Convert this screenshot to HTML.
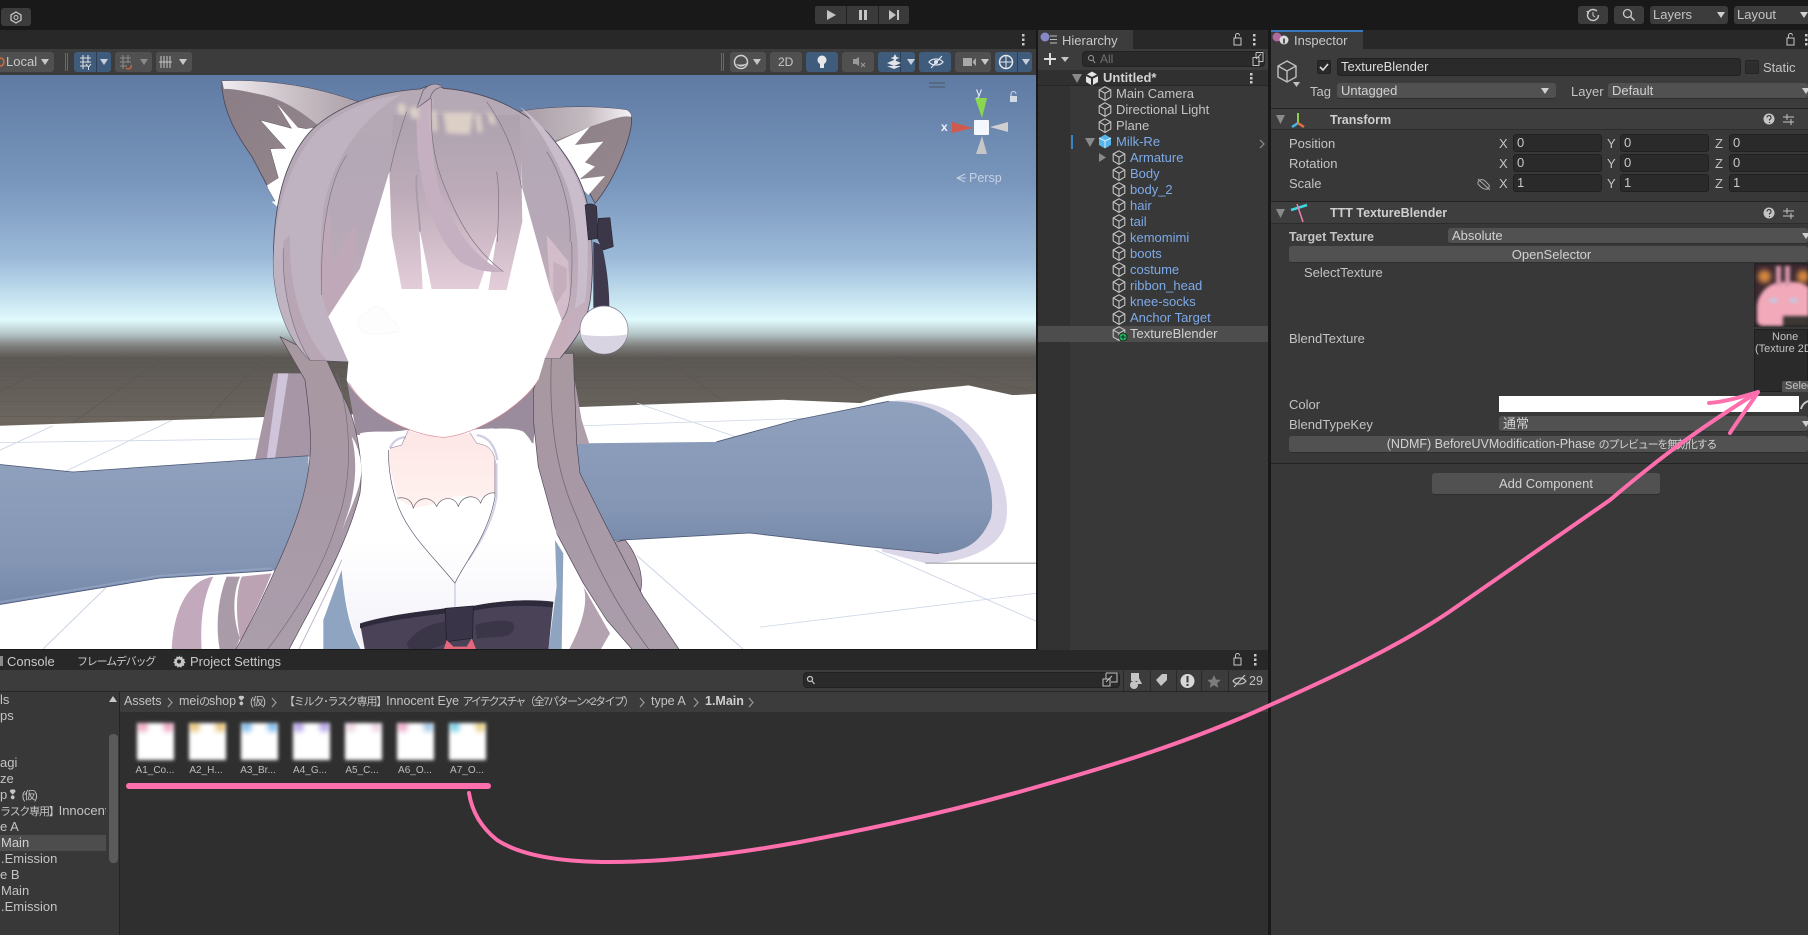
<!DOCTYPE html>
<html lang="ja"><head><meta charset="utf-8"><title>Unity TextureBlender</title>
<style>
html,body{margin:0;padding:0;background:#191919;width:1808px;height:935px;overflow:hidden}
body{position:relative;font:13px/16px "Liberation Sans","Noto Sans CJK JP",sans-serif;color:#c4c4c4}
.r{position:absolute}
.t{position:absolute;white-space:nowrap;height:16px;line-height:16px}
.b{position:absolute;background:#505050;border-radius:3px}
.u{background:#3f5c7d}
.f{position:absolute;background:#2a2a2a;border:1px solid #212121;border-radius:3px;box-sizing:border-box;color:#c8c8c8;padding-left:3px;line-height:16px;height:18px}
.d{position:absolute;background:#515151;border-radius:3px;box-sizing:border-box;color:#d2d2d2;padding-left:4px;line-height:15px;height:16px;border-bottom:1px solid #2e2e2e;white-space:nowrap}
.bl{color:#7daae8}
.j{font-size:11px;letter-spacing:-1.2px}
.th{position:absolute;top:723px;width:37px;height:37px;background:#fff;filter:blur(1.8px);overflow:hidden}
.th i{position:absolute;top:-2px;width:11px;height:11px;border-radius:50%;filter:blur(2px);opacity:.75}
.tl{position:absolute;top:763px;width:60px;text-align:center;font-size:10px;color:#bdbdbd;white-space:nowrap}
svg{position:absolute;overflow:visible}
</style></head><body>

<!-- top bar -->
<div class="b" style="left:1px;top:8px;width:30px;height:18px;background:#3c3c3c"></div>
<svg style="left:0;top:0" width="40" height="30"><path d="M16 12l5 3v5l-5 3-5-3v-5z" fill="none" stroke="#c8c8c8" stroke-width="1.3"/><circle cx="16" cy="17.5" r="2" fill="none" stroke="#c8c8c8"/></svg>
<div class="r" style="left:815px;top:6px;width:94px;height:18px;background:#3a3a3a;border-radius:2px"></div>
<div class="r" style="left:846px;top:6px;width:1px;height:18px;background:#222"></div>
<div class="r" style="left:878px;top:6px;width:1px;height:18px;background:#222"></div>
<svg style="left:815px;top:6px" width="94" height="18"><path d="M12 4l9 5-9 5z" fill="#c4c4c4"/><path d="M44 4h3v10h-3zM49 4h3v10h-3z" fill="#c4c4c4"/><path d="M74 4l7 5-7 5zM82 4h2v10h-2z" fill="#c4c4c4"/></svg>

<div class="b" style="left:1578px;top:6px;width:30px;height:18px;background:#3c3c3c"></div>
<svg style="left:1578px;top:6px" width="30" height="18"><circle cx="15" cy="9" r="5.5" fill="none" stroke="#c8c8c8" stroke-width="1.4" stroke-dasharray="30 5"/><path d="M15 6v3.500l2 1.500" fill="none" stroke="#c8c8c8"/><path d="M8 5l3 0 0 3z" fill="#c8c8c8"/></svg>
<div class="b" style="left:1614px;top:6px;width:30px;height:18px;background:#3c3c3c"></div>
<svg style="left:1614px;top:6px" width="30" height="18"><circle cx="13.500" cy="7.500" r="4" fill="none" stroke="#c8c8c8" stroke-width="1.300"/><path d="M16.500 10.500l4 4" stroke="#c8c8c8" stroke-width="1.500"/></svg>
<div class="b" style="left:1650px;top:6px;width:78px;height:18px;background:#3c3c3c"></div>
<div class="t" style="left:1653px;top:7px;color:#c4c4c4">Layers</div>
<svg style="left:1717px;top:12px" width="9" height="7"><path d="M0 0h8l-4 6z" fill="#d0d0d0"/></svg>
<div class="b" style="left:1734px;top:6px;width:74px;height:18px;background:#3c3c3c;border-radius:3px 0 0 3px"></div>
<div class="t" style="left:1737px;top:7px;color:#c4c4c4">Layout</div>
<svg style="left:1800px;top:12px" width="9" height="7"><path d="M0 0h8l-4 6z" fill="#d0d0d0"/></svg>

<!-- scene panel -->
<div class="r" style="left:0;top:30px;width:1036px;height:19px;background:#282828"></div>
<div class="r" style="left:0;top:49px;width:1036px;height:26px;background:#3c3c3c"></div>
<svg style="left:1020px;top:33px" width="8" height="14"><g fill="#c8c8c8"><rect x="2" y="1" width="2.500" height="2.500"/><rect x="2" y="5.500" width="2.500" height="2.500"/><rect x="2" y="10" width="2.500" height="2.500"/></g></svg>
<div class="b" style="left:-4px;top:52px;width:58px;height:20px"></div>
<div class="t" style="left:6px;top:54px;color:#c8c8c8">Local</div>
<svg style="left:0;top:52px" width="54" height="20"><circle cx="0" cy="10" r="4" fill="none" stroke="#d5683c" stroke-width="1.500"/><path d="M41 7h8l-4 6z" fill="#c8c8c8"/></svg>
<div class="r" style="left:65px;top:53px;width:1px;height:18px;background:#6a6a6a"></div><div class="r" style="left:67px;top:53px;width:1px;height:18px;background:#6a6a6a"></div>
<div class="b u" style="left:74px;top:52px;width:37px;height:20px"></div><div class="r" style="left:96px;top:52px;width:1px;height:20px;background:#2e3f55"></div>
<div class="b" style="left:115px;top:52px;width:37px;height:20px"></div>
<div class="b" style="left:156px;top:52px;width:36px;height:20px"></div>
<svg style="left:74px;top:52px" width="120" height="20">
<path d="M6 6h11M6 10h11M6 14h7M9 3v14M14 3v8" stroke="#dcdcdc" stroke-width="1.100" fill="none"/><path d="M12 12l2.500 3 2.500-3M14.500 15v3" stroke="#dcdcdc" fill="none"/><path d="M26 7h8l-4 6z" fill="#c8d0dc"/>
<path d="M46 6h11M46 10h11M46 14h7M49 3v14M54 3v8" stroke="#8a8a8a" stroke-width="1.100" fill="none"/><path d="M52 16c3 2 6 0 5-3" stroke="#d5683c" stroke-width="1.300" fill="none"/><path d="M66 7h8l-4 6z" fill="#8a8a8a"/>
<path d="M87 4v12M90 4v12M93 4v12M96 4v12M85 10h13" stroke="#c8c8c8" fill="none"/><path d="M105 7h8l-4 6z" fill="#c8c8c8"/></svg>
<div class="r" style="left:721px;top:53px;width:1px;height:18px;background:#6a6a6a"></div><div class="r" style="left:723px;top:53px;width:1px;height:18px;background:#6a6a6a"></div>
<div class="b" style="left:730px;top:52px;width:36px;height:20px"></div>
<div class="b" style="left:770px;top:52px;width:32px;height:20px"></div>
<div class="t" style="left:778px;top:54px;font-size:12px;color:#c8c8c8">2D</div>
<div class="b u" style="left:806px;top:52px;width:32px;height:20px"></div>
<div class="b" style="left:842px;top:52px;width:32px;height:20px"></div>
<div class="b u" style="left:878px;top:52px;width:37px;height:20px"></div><div class="r" style="left:900px;top:52px;width:1px;height:20px;background:#2e3f55"></div>
<div class="b u" style="left:919px;top:52px;width:32px;height:20px"></div>
<div class="b" style="left:955px;top:52px;width:36px;height:20px"></div>
<div class="b u" style="left:995px;top:52px;width:37px;height:20px"></div><div class="r" style="left:1017px;top:52px;width:1px;height:20px;background:#2e3f55"></div>
<svg style="left:730px;top:52px" width="310" height="20">
<circle cx="11" cy="10" r="6.500" fill="none" stroke="#d0d0d0" stroke-width="1.500"/><path d="M6 12a6.500 6.500 0 0 0 11-1c-3 2-7 2-11 1z" fill="#d0d0d0"/><path d="M23 7h8l-4 6z" fill="#c8c8c8"/>
<circle cx="92" cy="8" r="4.500" fill="#e8e8e8"/><rect x="90" y="11" width="4" height="5" fill="#e8e8e8"/>
<path d="M123 7h3l3-2v9l-3-2h-3z" fill="#9a9a9a"/><path d="M131 11l4 4M135 11l-4 4" stroke="#9a9a9a"/>
<path d="M157 11l7-3 7 3-7 3zM157 14l7 3 7-3" fill="#e2e6ea"/><path d="M165 2l1.500 3 3 1-3 1-1.500 3-1.500-3-3-1 3-1z" fill="#e2e6ea"/><path d="M177 7h8l-4 6z" fill="#c8d0dc"/>
<path d="M199 10c3-4 11-4 14 0-3 4-11 4-14 0z" fill="none" stroke="#e2e6ea" stroke-width="1.300"/><circle cx="206" cy="10" r="2" fill="#e2e6ea"/><path d="M201 16l11-12" stroke="#e2e6ea" stroke-width="1.200"/>
<rect x="233" y="6" width="9" height="8" fill="#a8a8a8"/><path d="M243 9l3-3v8l-3-3z" fill="#a8a8a8"/><path d="M251 7h8l-4 6z" fill="#c8c8c8"/>
<circle cx="276" cy="10" r="6.500" fill="none" stroke="#e6e8ea" stroke-width="1.500"/><path d="M270 10h12M276 4v12" stroke="#e6e8ea"/><path d="M292 7h8l-4 6z" fill="#c8d0dc"/></svg>

<!-- viewport -->
<svg style="left:0;top:75px;overflow:hidden" width="1036" height="574" viewBox="0 75 1036 574">
<defs>
<linearGradient id="sky" x1="0" y1="75" x2="0" y2="420" gradientUnits="userSpaceOnUse">
<stop offset="0" stop-color="#5f7ba3"/><stop offset=".31" stop-color="#7895bc"/><stop offset=".53" stop-color="#9bb9d8"/><stop offset=".645" stop-color="#c4e2ef"/><stop offset=".71" stop-color="#e0f9fc"/><stop offset=".75" stop-color="#b5c6c8"/><stop offset=".785" stop-color="#7f807e"/><stop offset=".82" stop-color="#5b5753"/><stop offset="1" stop-color="#6c665f"/>
</linearGradient>
<linearGradient id="hr" x1="0" y1="0" x2="0" y2="1"><stop offset="0" stop-color="#b4a9b5"/><stop offset=".5" stop-color="#b6a8b6"/><stop offset="1" stop-color="#c9b2c1"/></linearGradient>
<linearGradient id="bang" x1="0" y1="0" x2="0" y2="1"><stop offset="0" stop-color="#ada2ae"/><stop offset=".45" stop-color="#bdabb9"/><stop offset="1" stop-color="#e3cdd9"/></linearGradient>
<linearGradient id="ear" x1="0" y1="0" x2="1" y2="1"><stop offset="0" stop-color="#8b7d85"/><stop offset="1" stop-color="#97898f"/></linearGradient>
<linearGradient id="eart" x1="0" y1="0" x2="1" y2="0"><stop offset="0" stop-color="#f0ecf0"/><stop offset=".5" stop-color="#c9c0c6"/><stop offset="1" stop-color="#a89ca4"/></linearGradient>
<linearGradient id="eart2" x1="0" y1="0" x2="1" y2="0"><stop offset="0" stop-color="#a89ca4"/><stop offset=".6" stop-color="#c4bbc1"/><stop offset="1" stop-color="#f6f3f6"/></linearGradient>
<linearGradient id="arm" x1="0" y1="0" x2="0" y2="1"><stop offset="0" stop-color="#8fa1bd"/><stop offset=".7" stop-color="#8496b4"/><stop offset="1" stop-color="#7688a8"/></linearGradient>
<linearGradient id="lock" x1="0" y1="0" x2="0" y2="1"><stop offset="0" stop-color="#a8989f"/><stop offset=".45" stop-color="#a898a6"/><stop offset="1" stop-color="#ab9eab"/></linearGradient>
<linearGradient id="ds" x1="0" y1="0" x2="0" y2="1"><stop offset="0" stop-color="#fff"/><stop offset=".5" stop-color="#fff"/><stop offset="1" stop-color="#f3f1f8"/></linearGradient>
<linearGradient id="nk" x1="0" y1="0" x2="0" y2="1"><stop offset="0" stop-color="#fde6e6"/><stop offset="1" stop-color="#fff2ef"/></linearGradient>
<filter id="bl" x="-40%" y="-40%" width="180%" height="180%"><feGaussianBlur stdDeviation="6"/></filter>
</defs>
<rect x="0" y="75" width="1036" height="574" fill="url(#sky)"/>

<!-- world: coords X*.6633, 70+Y*.3764 -->
<g transform="translate(0,70) scale(.6633,.3764)" stroke-linejoin="round">
<g stroke="#56514d" stroke-width="1.500" fill="none" opacity=".5"><path d="M0 790h1568M0 815h1568M0 845h1568M0 880h1568M0 920h1568"/><path d="M100 760L-100 950M250 760L100 950M400 760L300 950M1000 760L1120 920M1200 760L1360 890M1350 760L1568 860"/></g>
<path d="M0 945L400 922L880 895L1180 876L1300 885L1568 860V1540H0Z" fill="#fff"/>
<g stroke="#cdd5e6" stroke-width="2" fill="none"><path d="M0 990L395 980M0 1010L80 945M100 1065L260 930M880 945L1220 925M960 885L1160 1005M1146 1480L1568 1389M1319 1275L1568 1469M960 1290L1120 1538M160 1375L65 1538"/></g>
<path d="M1290 890C1340 855 1400 850 1460 838L1568 880V1310H1395L1330 1280Z" fill="#fff"/>
<path d="M1320 885C1395 860 1445 900 1480 980C1512 1070 1528 1160 1512 1225C1495 1280 1450 1310 1395 1310L1330 1280Z" fill="#dbd7e8"/>
<path d="M1395 1310H1568" stroke="#777" stroke-width="2" fill="none"/>
<path d="M870 992L1080 988L1200 930L1340 880C1400 880 1440 920 1470 1000C1490 1060 1500 1130 1494 1190C1480 1250 1460 1280 1415 1285L1300 1265L1130 1230L925 1250L860 1100Z" fill="url(#arm)"/>
<path d="M925 1250L1130 1230L1300 1265L1415 1285M1080 988L1200 930L1340 880" stroke="#4a5675" stroke-width="2" fill="none"/>
</g>

<!-- torso + locks back: z2 coords, orig = 160+x/3, 380+y/3 -->
<g transform="translate(160,380) scale(.33333)" stroke-linejoin="round">
<path d="M340 -20L285 240L450 230L450 130L435 -20Z" fill="#a797a6"/>
<path d="M355 -20L320 238L345 236L385 -20Z" fill="#cfc4da"/>
<path d="M1240 -20L1265 120L1288 192L1240 192Z" fill="#ad9eaa"/>
<path d="M560 0H1140L1120 190L1000 145L700 160L590 165Z" fill="#9a8c9c"/>
</g>
<!-- left arm -->
<g transform="translate(0,70) scale(.6633,.3764)">
<path d="M0 1048L110 1068L465 1025V1322L410 1330L240 1350L0 1420Z" fill="url(#arm)"/>
<path d="M0 1414L240 1344L410 1324" stroke="#a9b6d8" stroke-width="5" fill="none" opacity=".4"/>
<path d="M0 1048L110 1068L465 1025M0 1420L240 1350L410 1330" stroke="#4a5675" stroke-width="2" fill="none"/>
</g>
<g transform="translate(160,380) scale(.33333)" stroke-linejoin="round">
<!-- tails -->
<path d="M160 590C90 600 40 680 35 812H125C120 720 130 650 160 590Z" fill="#c3a9bc"/>
<path d="M200 590C175 650 165 740 180 812H225L240 775C220 720 215 650 240 590Z" fill="#a99ca8"/>
<path d="M245 590C222 650 232 740 242 785L310 640L335 580Z" fill="#bca3b4"/>
<!-- right lower pieces -->
<path d="M1395 480C1430 520 1455 590 1440 640L1415 740L1340 640L1270 600L1300 500Z" fill="#ab9ba8" stroke="#4d4657" stroke-width="2"/>
<path d="M1270 620C1285 660 1270 730 1225 812H1320L1350 760Z" fill="#b3a2af"/>
<!-- dress -->
<path d="M600 160C640 150 680 160 740 150L930 155C990 145 1060 140 1090 155C1110 175 1120 190 1125 220L1170 420L1190 600L1205 812H610C570 750 555 650 545 570L540 480L600 300Z" fill="url(#ds)"/>
<path d="M545 570L490 720V812H605C565 745 552 650 545 570Z" fill="#8ea4c0"/>
<path d="M1185 480L1210 520L1205 812H1165L1190 620Z" fill="#8ea4c0"/>
<path d="M745 150C780 170 880 175 930 158L950 190C985 195 1000 210 1005 240V340C980 340 960 365 930 350C900 345 860 350 830 370L760 385L712 355L685 240L690 205L725 195Z" fill="url(#nk)"/>
<path d="M690 205C700 180 720 172 738 172M950 165C985 170 1005 195 1012 240" stroke="#d0cee0" stroke-width="7" fill="none"/>
<path d="M1010 250V350C1000 420 960 490 925 540" stroke="#d0cee0" stroke-width="5" fill="none"/>
<path d="M690 205L725 195L745 150M930 158L950 190C985 195 1000 210 1005 240" stroke="#75708a" stroke-width="1.500" fill="none"/>
<path d="M685 210C685 280 700 340 715 380C750 470 830 540 885 610C905 560 985 470 1005 350V240" stroke="#5f5a72" stroke-width="2" fill="none"/>
<path d="M712 355C730 350 755 355 760 385C770 350 815 345 830 380C840 350 885 345 895 380C905 345 950 340 962 370C970 340 1000 335 1005 340" stroke="#67626f" stroke-width="2" fill="none"/>
<path d="M885 610V680" stroke="#b4c0d8" stroke-width="3" fill="none"/>
<!-- bow -->
<path d="M600 730C680 705 780 695 855 685L940 678C1000 665 1100 655 1180 665L1165 812H615Z" fill="#4a4358"/>
<path d="M600 732C680 705 780 695 855 685L940 678C1000 665 1100 655 1180 667L1178 682C1090 672 1000 680 940 692L855 700C780 710 680 720 600 745Z" fill="#2e293b"/>
<path d="M945 735C980 725 1040 715 1060 730C1070 760 1040 770 1020 770L950 775Z" fill="#3b3548"/>
<path d="M740 790C770 745 820 730 855 725L860 790L800 812H750Z" fill="#3b3548"/>
<path d="M855 685L940 678L938 775L860 785Z" fill="#3a3448" stroke="#1c1a24" stroke-width="2"/>
<path d="M850 812L860 780L880 800H920L935 775L950 812Z" fill="#e5677c"/>
<!-- long locks -->
<path d="M360 -130L435 0C445 80 455 150 450 230C440 350 400 450 350 560C310 650 260 750 225 812H385C470 650 560 500 600 340C612 250 590 130 555 60L500 -60Z" fill="url(#lock)" stroke="#4d4657" stroke-width="2"/>
<path d="M575 170C590 230 590 300 570 380L540 470C562 400 604 330 604 270C604 230 590 190 575 170Z" fill="#fff"/>
<path d="M530 -20C575 120 580 300 530 430C490 560 420 680 320 812" stroke="#75697a" stroke-width="2" fill="none"/>
<path d="M545 540C520 600 470 700 415 812" stroke="#c4b8ca" stroke-width="3" fill="none"/>
<path d="M1160 -80L1120 30V120L1135 260L1190 460L1270 610L1340 720L1420 812H1560L1450 650L1340 440L1260 280L1250 190L1240 -80Z" fill="url(#lock)" stroke="#4d4657" stroke-width="2"/>
<path d="M1175 -80C1165 100 1185 270 1250 410C1300 540 1370 680 1470 812" stroke="#75697a" stroke-width="2.500" fill="none"/>
<path d="M1125 240C1135 330 1160 400 1195 470L1160 380Z" fill="#fff"/>
</g>

<!-- head: z1 coords, orig = 260+x/3, 75+y/3 -->
<g transform="translate(260,75) scale(.33333)" stroke-linejoin="round">
<!-- left ear -->
<path d="M-114 18C-40 15 50 20 150 40C220 55 280 75 320 90L100 250L60 405L-24 245C-70 180 -105 120 -114 40Z" fill="url(#ear)" stroke="#4d4657" stroke-width="2.500"/>
<path d="M-114 18C-40 15 50 20 150 40C220 55 280 75 320 90L190 165C140 120 70 70 0 58C-50 48 -85 40 -108 42Z" fill="url(#eart)"/>
<path d="M50 85L105 155L190 170L210 200L130 260L100 300L60 405L20 335L65 345L30 220L90 235L0 135L95 160Z" fill="#fff" stroke="#5a5462" stroke-width="1.500"/>
<path d="M50 85L120 165L210 150L130 220L35 222L110 275L20 332L62 378L35 380L62 405L150 250Z" fill="#fff"/>
<!-- right ear -->
<path d="M780 110C850 95 1000 90 1100 105C1115 112 1116 130 1114 150C1105 210 1060 320 1005 385L960 300L880 200Z" fill="url(#ear)" stroke="#4d4657" stroke-width="2.500"/>
<path d="M780 110C850 95 1000 90 1100 105C1115 112 1116 130 1112 125C1080 120 1040 140 990 155L880 200Z" fill="url(#eart2)"/>
<path d="M880 205L990 155L945 210L1030 200L975 262L1005 275L960 312L1035 303L985 360L960 335Z" fill="#fff"/>
<!-- dome -->
<path d="M40 560C40 400 70 250 160 160C240 90 350 50 480 42C510 30 530 22 550 40C680 50 780 100 860 170C930 250 970 320 985 400C1000 500 1000 600 990 680C975 760 940 800 900 850H860L265 860L150 855C80 790 40 680 40 560Z" fill="url(#hr)" stroke="#4d4657" stroke-width="2.500"/>
<path d="M40 560C45 400 90 260 170 170C240 110 330 70 420 60C310 130 220 240 190 400C180 500 180 600 190 660L210 720L265 860L150 855C80 790 40 680 40 560Z" fill="#c0b3c1"/>
<path d="M70 500C65 650 100 780 150 855H200C130 780 85 640 90 480Z" fill="#b8a6b5"/>
<path d="M185 660C175 560 185 470 210 400L215 570L285 450L290 490L270 640L205 725Z" fill="#bfa8b7"/>
<path d="M780 95C880 170 960 300 980 400C985 500 985 600 975 680L945 700C960 600 960 450 920 330C880 230 830 150 780 95Z" fill="#c9bdcc"/>
<path d="M860 480L925 560L930 680L905 735L870 640Z" fill="#d4bdca"/>
<path d="M880 560V700L920 640V580Z" fill="#c6afbd"/>
<path d="M855 850L900 740L935 720C930 770 915 820 900 850Z" fill="#c6aebb"/>
<!-- face -->
<path d="M388 290L300 580L205 725L265 860L260 915C300 1000 440 1080 550 1087C650 1080 790 990 835 915L855 850L905 735L870 640L787 340L780 200H400Z" fill="#fff"/>
<path d="M268 925C310 1005 440 1080 550 1087C650 1080 790 990 835 915" stroke="#d88a96" stroke-width="2" fill="none"/>
<path d="M340 695C360 690 385 710 385 735C405 735 418 745 415 770C390 775 340 785 310 770C285 755 290 720 320 715C325 705 330 700 340 695Z" fill="#fefdfd" stroke="#f8f5f5" stroke-width="2"/>
<!-- bangs -->
<path d="M388 290L395 480L425 642H488L478 460L515 642H655L712 470L685 645H740L787 440L785 340L780 120L400 120Z" fill="url(#bang)"/>
<path d="M470 100C465 250 490 450 600 560C640 585 690 595 730 590C650 550 590 480 540 350C515 260 510 150 520 70Z" fill="#c4b0c0"/>
<path d="M490 45C510 25 530 20 550 38C530 35 515 50 510 70L470 100Z" fill="#b5a7b5" stroke="#5f5868" stroke-width="2"/>
<g fill="#dccfc6" filter="url(#bl)"><path d="M548 112H640L630 178L560 175Z"/><path d="M412 88L435 85L438 118L416 118Z"/><path d="M448 98L475 95L478 130L455 132Z"/><path d="M512 108L530 108L532 170L518 170Z"/><path d="M645 118L662 118L668 172L652 172Z"/><path d="M680 108L702 122L708 152L690 145Z"/></g>
<g fill="none" stroke="#7a7080" stroke-width="2"><path d="M70 520C65 650 100 780 150 855"/><path d="M185 660C180 500 200 330 260 240"/><path d="M390 290C400 240 420 170 440 110"/><path d="M515 70C510 150 515 250 560 350C600 450 650 530 730 590"/><path d="M710 290C720 350 715 430 712 500"/><path d="M785 340C770 260 750 180 680 80"/><path d="M930 500C935 400 900 290 860 230"/><path d="M935 500C940 650 925 720 905 735"/></g>
<path d="M470 300C465 360 480 420 480 470" stroke="#a89aa9" stroke-width="5" fill="none"/>
<!-- ribbon -->
<path d="M975 390C985 385 1005 385 1010 395L1015 490L985 495Z" fill="#3b3648" stroke="#1e1b26" stroke-width="1.500"/>
<path d="M1015 430L1050 428L1060 515L1030 525L1012 490Z" fill="#3b3648" stroke="#1e1b26" stroke-width="1.500"/>
<path d="M1000 500L1025 510C1040 570 1048 640 1048 700L1000 710Z" fill="#3e394c"/>
<circle cx="1032" cy="765" r="72" fill="#fff" stroke="#7f7a8c" stroke-width="2"/>
<path d="M961 778C1000 785 1060 785 1103 778C1095 810 1065 836 1032 836C1000 836 968 810 961 778Z" fill="#d8d4e2"/>
</g>

<!-- gizmo -->
<path d="M975 98h12l-5 20z" fill="#8bd64f"/>
<path d="M952 122v11l21-5z" fill="#cf5b50"/>
<path d="M1008 122v10l-18-5z" fill="#cfcfcf"/>
<path d="M976 154h11l-5-18z" fill="#c6c6c6"/>
<rect x="974" y="120" width="15" height="15" fill="#f4f7fc" rx="1"/>
<path d="M929 83h16M929 87h16" stroke="#4e5660" stroke-width="1"/>
<rect x="1010" y="96" width="7" height="6" fill="#d2dae6"/><path d="M1011 96v-2a2.500 2.500 0 0 1 5 0" stroke="#d2dae6" fill="none"/>
<text x="976" y="96" font-family="Liberation Sans" font-size="12" fill="#eef2f8">y</text>
<text x="941" y="131" font-family="Liberation Sans" font-size="12" font-weight="bold" fill="#eef2f8">x</text>
<path d="M965 174l-8 4 8 4M958 178h8" stroke="#c6d2e4" fill="none"/>
<text x="969" y="182" font-family="Liberation Sans" font-size="12.500" fill="#c6d2e4">Persp</text>
</svg>

<!-- hierarchy -->
<div class="r" style="left:1038px;top:30px;width:230px;height:19px;background:#282828"></div>
<div class="r" style="left:1038px;top:30px;width:95px;height:19px;background:#3c3c3c"></div>
<div class="r" style="left:1038px;top:49px;width:230px;height:21px;background:#3c3c3c"></div>
<div class="r" style="left:1038px;top:70px;width:230px;height:580px;background:#383838"></div>
<div class="r" style="left:1038px;top:86px;width:32px;height:564px;background:#323232"></div>
<div class="r" style="left:1038px;top:70px;width:230px;height:16px;background:#303030;border-bottom:1px solid #262626;box-sizing:border-box"></div>
<div class="r" style="left:1038px;top:326px;width:230px;height:16px;background:#4d4d4d"></div>
<div class="r" style="left:1071px;top:135px;width:2px;height:14px;background:#3a84c8"></div>
<svg style="left:1038px;top:30px" width="30" height="19"><circle cx="7" cy="7" r="4.500" fill="#8788c8"/><path d="M12 6h7M12 9.500h7M12 13h7" stroke="#bcbcbc"/></svg>
<div class="t" style="left:1062px;top:33px;color:#c8c8c8">Hierarchy</div>
<svg style="left:1232px;top:32px" width="36" height="16"><rect x="2" y="6" width="7" height="7" fill="none" stroke="#c8c8c8"/><path d="M3.500 6V3.500a2 2 0 0 1 4 0" fill="none" stroke="#c8c8c8"/><g fill="#c8c8c8"><rect x="21" y="2" width="2.500" height="2.500"/><rect x="21" y="6.500" width="2.500" height="2.500"/><rect x="21" y="11" width="2.500" height="2.500"/></g></svg>
<svg style="left:1042px;top:50px" width="32" height="18"><path d="M2 9h12M8 3v12" stroke="#dcdcdc" stroke-width="2"/><path d="M19 7h8l-4 5z" fill="#c4c4c4"/></svg>
<div class="r" style="left:1082px;top:51px;width:183px;height:16px;background:#2a2a2a;border:1px solid #222;box-sizing:border-box;border-radius:4px"></div>
<div class="t" style="left:1100px;top:51px;font-size:12px;color:#707070">All</div>
<svg style="left:1084px;top:51px" width="181" height="16"><circle cx="7" cy="7" r="2.500" fill="none" stroke="#9a9a9a"/><path d="M9 9l2 3" stroke="#9a9a9a"/><path d="M172 1.500h7v9h-5M172 1.500v5M169 6.500h6v8h-6zM172 8l5-5" stroke="#c0c0c0" fill="none"/></svg>

<svg width="0" height="0" style="position:absolute"><defs>
<g id="cube"><path d="M6.500 0.800L12.300 4V11L6.500 14.500L0.700 11V4Z" fill="none" stroke="#c4c4c4" stroke-width="1.100"/><path d="M0.700 4L6.500 7.200L12.300 4M6.500 7.200V14.500" fill="none" stroke="#c4c4c4" stroke-width="1.100"/></g>
</defs></svg>
<svg style="left:1038px;top:70px" width="230" height="272">
<path d="M34 4h10l-5 9z" fill="#8a8a8a"/>
<g transform="translate(47,1)"><path d="M7 .5L13 4V11L7 14.500L1 11V4Z" fill="#e4e4e4"/><path d="M7 7L1 4M7 7L13 4M7 7V14" stroke="#303030" stroke-width="2"/></g>
<g fill="#c8c8c8"><rect x="212" y="3" width="2.500" height="2.500"/><rect x="212" y="7" width="2.500" height="2.500"/><rect x="212" y="11" width="2.500" height="2.500"/></g>
<use href="#cube" x="60.500" y="16"/><use href="#cube" x="60.500" y="32"/><use href="#cube" x="60.500" y="48"/>
<path d="M47 68h10l-5 9z" fill="#8a8a8a"/>
<g transform="translate(60,64)"><path d="M7 .5L13 4V11L7 14.500L1 11V4Z" fill="#55b4ea"/><path d="M7 7L1 4M7 7L13 4M7 7V14" stroke="#d4ecfa" stroke-width="1"/></g>
<path d="M222 78l4 4-4 4" stroke="#8f8f8f" fill="none" stroke-width="1.200" transform="translate(0,-8)"/>
<path d="M61 83v9l7-4.500z" fill="#8a8a8a"/>
<use href="#cube" x="74.500" y="80"/><use href="#cube" x="74.500" y="96"/><use href="#cube" x="74.500" y="112"/><use href="#cube" x="74.500" y="128"/><use href="#cube" x="74.500" y="144"/><use href="#cube" x="74.500" y="160"/><use href="#cube" x="74.500" y="176"/><use href="#cube" x="74.500" y="192"/><use href="#cube" x="74.500" y="208"/><use href="#cube" x="74.500" y="224"/><use href="#cube" x="74.500" y="240"/><use href="#cube" x="74.500" y="256"/>
<circle cx="85" cy="267" r="4" fill="#1ebc5a" stroke="#222"/><path d="M82.500 267h5M85 264.500v5" stroke="#123" stroke-width="1"/>
</svg>
<div class="t" style="left:1103px;top:70px;font-weight:bold;color:#d2d2d2">Untitled*</div>
<div class="t" style="left:1116px;top:86px">Main Camera</div>
<div class="t" style="left:1116px;top:102px">Directional Light</div>
<div class="t" style="left:1116px;top:118px">Plane</div>
<div class="t bl" style="left:1116px;top:134px">Milk-Re</div>
<div class="t bl" style="left:1130px;top:150px">Armature</div>
<div class="t bl" style="left:1130px;top:166px">Body</div>
<div class="t bl" style="left:1130px;top:182px">body_2</div>
<div class="t bl" style="left:1130px;top:198px">hair</div>
<div class="t bl" style="left:1130px;top:214px">tail</div>
<div class="t bl" style="left:1130px;top:230px">kemomimi</div>
<div class="t bl" style="left:1130px;top:246px">boots</div>
<div class="t bl" style="left:1130px;top:262px">costume</div>
<div class="t bl" style="left:1130px;top:278px">ribbon_head</div>
<div class="t bl" style="left:1130px;top:294px">knee-socks</div>
<div class="t bl" style="left:1130px;top:310px">Anchor Target</div>
<div class="t" style="left:1130px;top:326px;color:#d0d0d0">TextureBlender</div>

<!-- inspector -->
<div class="r" style="left:1271px;top:30px;width:537px;height:19px;background:#282828"></div>
<div class="r" style="left:1271px;top:30px;width:92px;height:19px;background:#3c3c3c"></div>
<div class="r" style="left:1271px;top:30px;width:92px;height:2px;background:#3a79bb"></div>
<div class="r" style="left:1271px;top:49px;width:537px;height:886px;background:#383838"></div>
<div class="r" style="left:1271px;top:49px;width:537px;height:59px;background:#3c3c3c"></div>
<svg style="left:1271px;top:32px" width="30" height="17"><circle cx="6" cy="5" r="4.500" fill="#b06a9c"/><circle cx="13" cy="8" r="4.500" fill="#d8d8d8"/><rect x="12.200" y="6.500" width="1.600" height="5" fill="#333"/></svg>
<div class="t" style="left:1294px;top:33px;color:#c8c8c8">Inspector</div>
<svg style="left:1785px;top:32px" width="24" height="16"><rect x="2" y="6" width="7" height="7" fill="none" stroke="#c8c8c8"/><path d="M3.500 6V3.500a2 2 0 0 1 4 0" fill="none" stroke="#c8c8c8"/><g fill="#c8c8c8"><rect x="20" y="2" width="2.500" height="2.500"/><rect x="20" y="6.500" width="2.500" height="2.500"/><rect x="20" y="11" width="2.500" height="2.500"/></g></svg>
<svg style="left:1277px;top:59px" width="30" height="30"><path d="M10 2L19 7V18L10 23L1 18V7Z" fill="none" stroke="#c0c0c0" stroke-width="1.400"/><path d="M1 7L10 12L19 7M10 12V23" fill="none" stroke="#c0c0c0" stroke-width="1.400"/><path d="M16 23h7l-3.500 5z" fill="#c0c0c0"/></svg>
<div class="r" style="left:1317px;top:60px;width:14px;height:14px;background:#2a2a2a;border:1px solid #222;box-sizing:border-box;border-radius:2px"></div>
<svg style="left:1317px;top:60px" width="14" height="14"><path d="M3 7l3 3 5-6" stroke="#e0e0e0" stroke-width="1.600" fill="none"/></svg>
<div class="f" style="left:1337px;top:58px;width:404px;height:18px;color:#dedede">TextureBlender</div>
<div class="r" style="left:1745px;top:60px;width:14px;height:14px;background:#2e2e2e;border:1px solid #242424;box-sizing:border-box;border-radius:2px"></div>
<div class="t" style="left:1763px;top:60px">Static</div>
<div class="t" style="left:1310px;top:84px">Tag</div>
<div class="d" style="left:1337px;top:83px;width:219px">Untagged</div>
<svg style="left:1541px;top:88px" width="9" height="7"><path d="M0 0h8l-4 6z" fill="#d0d0d0"/></svg>
<div class="t" style="left:1571px;top:84px">Layer</div>
<div class="d" style="left:1608px;top:83px;width:200px">Default</div>
<svg style="left:1802px;top:88px" width="9" height="7"><path d="M0 0h8l-4 6z" fill="#d0d0d0"/></svg>
<div class="r" style="left:1271px;top:108px;width:537px;height:1px;background:#232323"></div>

<div class="r" style="left:1271px;top:109px;width:537px;height:20px;background:#3e3e3e"></div>
<div class="r" style="left:1271px;top:129px;width:537px;height:1px;background:#2c2c2c"></div>
<svg style="left:1271px;top:109px" width="537" height="20"><path d="M5 6h9l-4.500 9z" fill="#8a8a8a"/><path d="M27 14V4" stroke="#8ed04a" stroke-width="2"/><path d="M27 14l-6 4" stroke="#46b8e8" stroke-width="2.500"/><path d="M27 14l6 4" stroke="#e07040" stroke-width="2.500"/>
<circle cx="498" cy="10" r="5.500" fill="#c4c4c4"/><path d="M496 8.500a2 2 0 1 1 2.500 2v1M498.500 13v1" stroke="#383838" fill="none" stroke-width="1.100"/><path d="M512 8h11M512 13h11M516 5v6M520 10v6" stroke="#c4c4c4" fill="none"/></svg>
<div class="t" style="left:1330px;top:112px;font-weight:bold;font-size:12.500px;color:#cfcfcf">Transform</div>
<div class="t" style="left:1289px;top:136px">Position</div>
<div class="t" style="left:1289px;top:156px">Rotation</div>
<div class="t" style="left:1289px;top:176px">Scale</div>
<svg style="left:1476px;top:176px" width="16" height="16"><path d="M2 6c2-3 5-3 7-1l4 4c1 2-1 5-4 4-3 0-5-3-7-5zM2 3l12 11" stroke="#a8a8a8" fill="none"/></svg>
<div class="t" style="left:1499px;top:136px">X</div><div class="f" style="left:1513px;top:134px;width:89px">0</div>
<div class="t" style="left:1607px;top:136px">Y</div><div class="f" style="left:1620px;top:134px;width:89px">0</div>
<div class="t" style="left:1715px;top:136px">Z</div><div class="f" style="left:1729px;top:134px;width:85px">0</div>
<div class="t" style="left:1499px;top:156px">X</div><div class="f" style="left:1513px;top:154px;width:89px">0</div>
<div class="t" style="left:1607px;top:156px">Y</div><div class="f" style="left:1620px;top:154px;width:89px">0</div>
<div class="t" style="left:1715px;top:156px">Z</div><div class="f" style="left:1729px;top:154px;width:85px">0</div>
<div class="t" style="left:1499px;top:176px">X</div><div class="f" style="left:1513px;top:174px;width:89px">1</div>
<div class="t" style="left:1607px;top:176px">Y</div><div class="f" style="left:1620px;top:174px;width:89px">1</div>
<div class="t" style="left:1715px;top:176px">Z</div><div class="f" style="left:1729px;top:174px;width:85px">1</div>
<div class="r" style="left:1271px;top:201px;width:537px;height:1px;background:#232323"></div>

<div class="r" style="left:1271px;top:202px;width:537px;height:21px;background:#3e3e3e"></div>
<div class="r" style="left:1271px;top:223px;width:537px;height:1px;background:#2c2c2c"></div>
<svg style="left:1271px;top:202px" width="537" height="21"><path d="M5 7h9l-4.500 9z" fill="#8a8a8a"/><path d="M20 8l16-5" stroke="#3cd8e4" stroke-width="2.500"/><path d="M26 2l6 18" stroke="#f080b0" stroke-width="1.500"/>
<circle cx="498" cy="11" r="5.500" fill="#c4c4c4"/><path d="M496 9.500a2 2 0 1 1 2.500 2v1M498.500 14v1" stroke="#383838" fill="none" stroke-width="1.100"/><path d="M512 9h11M512 14h11M516 6v6M520 11v6" stroke="#c4c4c4" fill="none"/></svg>
<div class="t" style="left:1330px;top:205px;font-weight:bold;font-size:12.500px;color:#cfcfcf">TTT TextureBlender</div>
<div class="t" style="left:1289px;top:229px;font-weight:bold;font-size:12.500px;color:#c4c4c4">Target Texture</div>
<div class="d" style="left:1448px;top:228px;width:360px">Absolute</div>
<svg style="left:1802px;top:233px" width="9" height="7"><path d="M0 0h8l-4 6z" fill="#d0d0d0"/></svg>
<div class="d" style="left:1289px;top:246px;width:519px;height:17px;padding:0;text-align:center;line-height:17px;text-indent:6px">OpenSelector</div>
<div class="t" style="left:1304px;top:265px">SelectTexture</div>
<div class="t" style="left:1289px;top:331px">BlendTexture</div>
<div class="r" style="left:1754px;top:263px;width:54px;height:64px;background:#1f1f1f;overflow:hidden">
 <div class="r" style="left:1px;top:1px;width:54px;height:62px;background:#3d2a33;overflow:hidden;filter:blur(1.500px)">
  <div class="r" style="left:3px;top:6px;width:13px;height:13px;background:#d88a40;border-radius:50%;filter:blur(2px)"></div>
  <div class="r" style="left:42px;top:6px;width:12px;height:13px;background:#d88a40;border-radius:50%;filter:blur(2px)"></div>
  <div class="r" style="left:2px;top:18px;width:62px;height:44px;background:#f2a9ba;border-radius:26px 26px 6px 6px"></div>
  <div class="r" style="left:21px;top:2px;width:5px;height:20px;background:#d898ac"></div>
  <div class="r" style="left:30px;top:2px;width:5px;height:20px;background:#d898ac"></div>
  <div class="r" style="left:14px;top:34px;width:9px;height:5px;background:#c4c8e0;border-radius:50%"></div>
  <div class="r" style="left:34px;top:34px;width:9px;height:5px;background:#c4c8e0;border-radius:50%"></div>
  <div class="r" style="left:28px;top:52px;width:30px;height:12px;background:#3c3634"></div>
 </div>
</div>
<div class="r" style="left:1754px;top:329px;width:54px;height:63px;background:#2a2a2a;border:1px solid #1f1f1f;box-sizing:border-box"></div>
<div class="t" style="left:1772px;top:329px;font-size:11px">None</div>
<div class="t" style="left:1755px;top:341px;font-size:11px">(Texture 2D</div>
<div class="r" style="left:1782px;top:381px;width:26px;height:11px;background:#505050;border-radius:2px 0 0 0"></div>
<div class="t" style="left:1785px;top:378px;font-size:11px">Select</div>
<div class="t" style="left:1289px;top:397px">Color</div>
<div class="r" style="left:1499px;top:396px;width:300px;height:16px;background:#fff"></div>
<svg style="left:1800px;top:397px" width="9" height="14"><path d="M1 12c1-4 3-6 7-8" stroke="#c8c8c8" stroke-width="2" fill="none"/></svg>
<div class="t" style="left:1289px;top:417px">BlendTypeKey</div>
<div class="d" style="left:1499px;top:416px;width:309px">通常</div>
<svg style="left:1802px;top:421px" width="9" height="7"><path d="M0 0h8l-4 6z" fill="#d0d0d0"/></svg>
<div class="d" style="left:1289px;top:436px;width:519px;height:17px;padding:0;text-align:center;line-height:17px;text-indent:6px;font-size:12.500px">(NDMF) BeforeUVModification-Phase <span class="j">のプレビューを無効化する</span></div>
<div class="r" style="left:1271px;top:463px;width:537px;height:1px;background:#232323"></div>
<div class="d" style="left:1432px;top:473px;width:228px;height:22px;padding:0;text-align:center;line-height:21px">Add Component</div>

<!-- bottom project panel -->
<div class="r" style="left:0;top:650px;width:1268px;height:20px;background:#282828"></div>
<div class="r" style="left:0;top:670px;width:1268px;height:21px;background:#3c3c3c;border-bottom:1px solid #262626;box-sizing:content-box"></div>
<div class="r" style="left:0;top:692px;width:119px;height:243px;background:#383838"></div>
<div class="r" style="left:119px;top:692px;width:1px;height:243px;background:#232323"></div>
<div class="r" style="left:120px;top:692px;width:1148px;height:20px;background:#3c3c3c"></div>
<div class="r" style="left:120px;top:712px;width:1148px;height:223px;background:#2f2f2f"></div>
<div class="r" style="left:0;top:835px;width:106px;height:16px;background:#4d4d4d"></div>
<div class="r" style="left:109px;top:734px;width:9px;height:129px;background:#5a5a5a;border-radius:4px"></div>
<svg style="left:108px;top:696px" width="10" height="8"><path d="M1 6h8L5 0z" fill="#c8c8c8"/></svg>
<div class="r" style="left:0;top:656px;width:3px;height:10px;background:#8a8a8a"></div>
<div class="t" style="left:7px;top:654px;color:#c8c8c8">Console</div>
<div class="t j" style="left:77px;top:654px;color:#c8c8c8">フレームデバッグ</div>
<svg style="left:172px;top:654px" width="16" height="16"><path d="M8 1.500l1.300 2 2.300-.6.500 2.300 2.300.6-.6 2.200 1.700 1.700-1.900 1.300.3 2.300-2.400.2-1.100 2.100-2-1.200-2 1.200-1.100-2.100-2.400-.2.300-2.300-1.900-1.300 1.700-1.700-.6-2.200 2.300-.6.500-2.300 2.300.6z" fill="#c4c4c4" transform="scale(.88)"/><circle cx="7" cy="7.500" r="2" fill="#282828"/></svg>
<div class="t" style="left:190px;top:654px;color:#c8c8c8">Project Settings</div>
<svg style="left:1230px;top:652px" width="36" height="16"><rect x="4" y="6" width="7" height="7" fill="none" stroke="#c8c8c8"/><path d="M5.500 6V3.500a2 2 0 0 1 4 0" fill="none" stroke="#c8c8c8"/><g fill="#c8c8c8"><rect x="24" y="2" width="2.500" height="2.500"/><rect x="24" y="6.500" width="2.500" height="2.500"/><rect x="24" y="11" width="2.500" height="2.500"/></g></svg>
<div class="r" style="left:803px;top:672px;width:317px;height:16px;background:#2a2a2a;border:1px solid #222;box-sizing:border-box;border-radius:4px"></div>
<svg style="left:803px;top:672px" width="318" height="16"><circle cx="7" cy="7" r="2.500" fill="none" stroke="#c8c8c8" stroke-width="1.200"/><path d="M9 9l2.500 3" stroke="#c8c8c8" stroke-width="1.200"/><path d="M303 1h11v9h-6M303 1v6M300 7h7v7h-7zM303 10l6-6" stroke="#c0c0c0" fill="none"/></svg>
<div class="r" style="left:1123px;top:670px;width:1px;height:21px;background:#2a2a2a"></div><div class="r" style="left:1150px;top:670px;width:1px;height:21px;background:#2a2a2a"></div><div class="r" style="left:1176px;top:670px;width:1px;height:21px;background:#2a2a2a"></div><div class="r" style="left:1201px;top:670px;width:1px;height:21px;background:#2a2a2a"></div><div class="r" style="left:1228px;top:670px;width:1px;height:21px;background:#2a2a2a"></div>
<svg style="left:1124px;top:671px" width="144" height="20">
<rect x="7" y="2" width="8" height="8" fill="#c4c4c4"/><circle cx="10" cy="14" r="4" fill="#c4c4c4"/><path d="M15 7l3 6h-6z" fill="#c4c4c4"/>
<path d="M32 9l6-6h5v6l-6 6z" fill="#c4c4c4"/>
<circle cx="63.500" cy="10" r="7" fill="#d8d8d8"/><rect x="62.500" y="5" width="2" height="6.500" fill="#3c3c3c"/><rect x="62.500" y="13" width="2" height="2" fill="#3c3c3c"/>
<path d="M90 4l2 4.500 4.800.4-3.600 3.200 1.100 4.700-4.300-2.500-4.300 2.500 1.100-4.700-3.600-3.200 4.800-.4z" fill="#7c7c7c"/>
<path d="M109 10c3-4 10-4 13 0-3 4-10 4-13 0z" fill="none" stroke="#c4c4c4" stroke-width="1.200"/><path d="M110 16l11-12" stroke="#c4c4c4" stroke-width="1.200"/></svg>
<div class="t" style="left:1249px;top:673px;color:#c0c0c0;font-size:12.500px">29</div>

<!-- tree -->
<div class="t" style="left:0;top:692px">ls</div>
<div class="t" style="left:0;top:708px">ps</div>
<div class="t" style="left:0;top:755px">agi</div>
<div class="t" style="left:0;top:771px">ze</div>
<div class="t" style="left:0;top:787px">p❢ <span class="j">(仮)</span></div>
<div class="t" style="left:0;top:803px;width:106px;overflow:hidden"><span class="j">ラスク専用】</span>Innocent</div>
<div class="t" style="left:0;top:819px">e A</div>
<div class="t" style="left:1px;top:835px;color:#d0d0d0">Main</div>
<div class="t" style="left:1px;top:851px">.Emission</div>
<div class="t" style="left:0;top:867px">e B</div>
<div class="t" style="left:1px;top:883px">Main</div>
<div class="t" style="left:1px;top:899px">.Emission</div>

<!-- breadcrumb -->
<div class="t" style="left:124px;top:693px;font-size:12.500px">Assets</div>
<div class="t" style="left:179px;top:693px;font-size:12.500px">mei<span class="j">の</span>shop❢ <span class="j">(仮)</span></div>
<div class="t" style="left:284px;top:693px;font-size:12.500px"><span class="j">【ミルク･ラスク専用】</span>Innocent Eye <span class="j" style="letter-spacing:-2px">アイテクスチャ</span><span class="j" style="letter-spacing:-1.500px">（全7パターン×2タイプ）</span></div>
<div class="t" style="left:651px;top:693px;font-size:12.500px">type A</div>
<div class="t" style="left:705px;top:693px;font-weight:bold;font-size:12.500px;color:#cfcfcf">1.Main</div>
<svg style="left:120px;top:692px" width="650" height="20"><g fill="none" stroke="#9a9a9a" stroke-width="1.200"><path d="M48 6l4 4.500-4 4.500M152 6l4 4.500-4 4.500M520 6l4 4.500-4 4.500M574 6l4 4.500-4 4.500M629 6l4 4.500-4 4.500"/></g></svg>

<!-- thumbnails -->
<div class="th" style="left:137px"><i style="left:0;background:#e88ab0"></i><i style="left:26px;background:#e88ab0"></i></div>
<div class="th" style="left:189px"><i style="left:0;background:#e0b050"></i><i style="left:26px;background:#e0b050"></i></div>
<div class="th" style="left:241px"><i style="left:0;background:#58a8e8"></i><i style="left:26px;background:#58a8e8"></i></div>
<div class="th" style="left:293px"><i style="left:0;background:#a088e0"></i><i style="left:26px;background:#a088e0"></i></div>
<div class="th" style="left:345px"><i style="left:0;background:#e8c8dc"></i><i style="left:26px;background:#e8c8dc"></i></div>
<div class="th" style="left:397px"><i style="left:0;background:#ea90b8"></i><i style="left:26px;background:#88b8e0"></i></div>
<div class="th" style="left:449px"><i style="left:0;background:#50c0e0"></i><i style="left:26px;background:#e0c060"></i></div>
<div class="tl" style="left:125px">A1_Co...</div>
<div class="tl" style="left:176px">A2_H...</div>
<div class="tl" style="left:228px">A3_Br...</div>
<div class="tl" style="left:280px">A4_G...</div>
<div class="tl" style="left:332px">A5_C...</div>
<div class="tl" style="left:385px">A6_O...</div>
<div class="tl" style="left:437px">A7_O...</div>

<!-- pink annotation -->
<svg style="left:0;top:0;z-index:5" width="1808" height="935" fill="none" stroke="#ff6fae" stroke-linecap="round" stroke-linejoin="round">
<path d="M129 786H488" stroke-width="6"/>
<path d="M469 793C472 812 482 828 497 840C520 855 560 862 610 862C670 862 740 853 800 842C870 829 950 812 1040 786C1110 766 1190 742 1268 706C1340 674 1400 645 1449 612C1510 570 1560 535 1610 500C1650 466 1690 434 1758 392" stroke-width="4"/>
<path d="M1709 403C1725 402 1745 396 1758 392C1750 405 1738 420 1730 433" stroke-width="4"/>
</svg>
</body></html>
